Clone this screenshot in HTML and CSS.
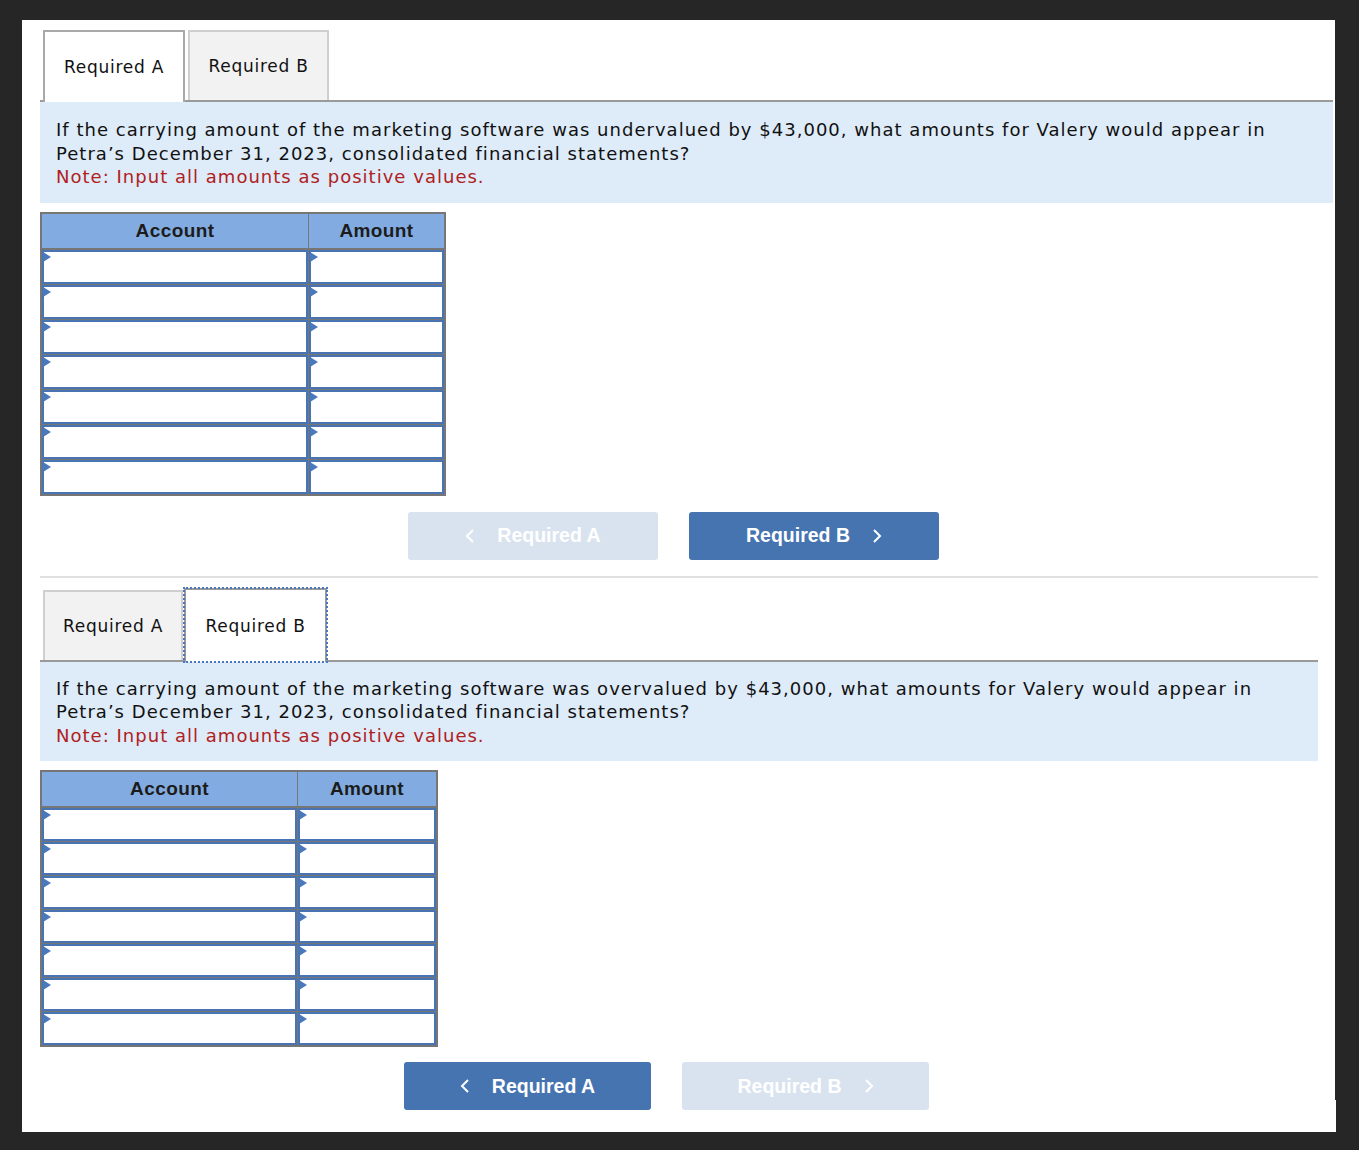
FILE: index.html
```html
<!DOCTYPE html>
<html>
<head>
<meta charset="utf-8">
<link rel="stylesheet" href="styles.css">
</head>
<body>
<div class="panel">
  <section class="part part-a">
    <div class="tabs">
      <div class="tab active">Required A</div>
      <div class="tab">Required B</div>
    </div>
    <div class="question">
      <p>If the carrying amount of the marketing software was undervalued by $43,000, what amounts for Valery would appear in<br>Petra’s December 31, 2023, consolidated financial statements?</p>
      <p class="note">Note: Input all amounts as positive values.</p>
    </div>
    <table class="grid grid-a">
      <thead><tr><th class="c-acc">Account</th><th class="c-amt">Amount</th></tr></thead>
      <tbody>
        <tr><td><div class="inp"></div></td><td><div class="inp"></div></td></tr>
        <tr><td><div class="inp"></div></td><td><div class="inp"></div></td></tr>
        <tr><td><div class="inp"></div></td><td><div class="inp"></div></td></tr>
        <tr><td><div class="inp"></div></td><td><div class="inp"></div></td></tr>
        <tr><td><div class="inp"></div></td><td><div class="inp"></div></td></tr>
        <tr><td><div class="inp"></div></td><td><div class="inp"></div></td></tr>
        <tr><td><div class="inp"></div></td><td><div class="inp"></div></td></tr>
      </tbody>
    </table>
    <div class="nav nav-a">
      <button class="btn disabled"><svg class="chev" viewBox="0 0 10 16" width="10" height="16"><polyline points="8,2 2,8 8,14"/></svg><span>Required A</span></button>
      <button class="btn"><span>Required B</span><svg class="chev" viewBox="0 0 10 16" width="10" height="16"><polyline points="2,2 8,8 2,14"/></svg></button>
    </div>
  </section>
  <div class="sep"></div>
  <section class="part part-b">
    <div class="tabs">
      <div class="tab">Required A</div>
      <div class="tab active focus">Required B</div>
    </div>
    <div class="question">
      <p>If the carrying amount of the marketing software was overvalued by $43,000, what amounts for Valery would appear in<br>Petra’s December 31, 2023, consolidated financial statements?</p>
      <p class="note">Note: Input all amounts as positive values.</p>
    </div>
    <table class="grid grid-b">
      <thead><tr><th class="c-acc">Account</th><th class="c-amt">Amount</th></tr></thead>
      <tbody>
        <tr><td><div class="inp"></div></td><td><div class="inp"></div></td></tr>
        <tr><td><div class="inp"></div></td><td><div class="inp"></div></td></tr>
        <tr><td><div class="inp"></div></td><td><div class="inp"></div></td></tr>
        <tr><td><div class="inp"></div></td><td><div class="inp"></div></td></tr>
        <tr><td><div class="inp"></div></td><td><div class="inp"></div></td></tr>
        <tr><td><div class="inp"></div></td><td><div class="inp"></div></td></tr>
        <tr><td><div class="inp"></div></td><td><div class="inp"></div></td></tr>
      </tbody>
    </table>
    <div class="nav nav-b">
      <button class="btn"><svg class="chev" viewBox="0 0 10 16" width="10" height="16"><polyline points="8,2 2,8 8,14"/></svg><span>Required A</span></button>
      <button class="btn disabled"><span>Required B</span><svg class="chev" viewBox="0 0 10 16" width="10" height="16"><polyline points="2,2 8,8 2,14"/></svg></button>
    </div>
  </section>
  <div class="notch"></div>
</div>
</body>
</html>
```
FILE: styles.css
```css
html, body {
  margin: 0;
  padding: 0;
  background: #262626;
}
body {
  font-family: "DejaVu Sans", Verdana, sans-serif;
  color: #111;
  height: 1150px;
  overflow: hidden;
}
.panel {
  position: relative;
  margin: 20px 0 0 22px;
  width: 1313px;
  height: 1112px;
  background: #fff;
  padding: 10px 0 0 18px;
  box-sizing: border-box;
}
.notch {
  position: absolute;
  right: -1px;
  bottom: 0;
  width: 1px;
  height: 32px;
  background: #fff;
}
.part-a { width: 1293px; }
.part-b { width: 1278px; margin-top: 12px; }

.tabs {
  display: flex;
  padding-left: 3px;
  border-bottom: 2px solid #9a9a9a;
  height: 70px;
  box-sizing: content-box;
}
.tab {
  height: 70px;
  box-sizing: border-box;
  display: flex;
  align-items: center;
  justify-content: center;
  font-size: 17px;
  letter-spacing: 0.75px;
  background: #f2f2f2;
  border: 2px solid #cfcfcf;
  border-bottom: none;
  margin-right: 3px;
}
.part-a .tab:first-child { width: 142px; }
.part-a .tab:nth-child(2) { width: 141px; }
.part-b .tab:first-child { width: 140px; margin-right: 1px; }
.part-b .tab:nth-child(2) { width: 143px; }
.tab.active {
  background: #fff;
  border-color: #a9a9a9;
  height: 72px;
  margin-bottom: -2px;
}
.tab.focus {
  outline: 2px dotted #4a78c0;
  outline-offset: -1px;
  border-color: #9a9a9a;
  margin-top: -2px;
  height: 74px;
}

.question {
  background: #deebf8;
  padding: 16px 16px 14px 16px;
  font-size: 18px;
  letter-spacing: 1.02px;
  line-height: 23.5px;
}
.part-b .question { padding-top: 15px; padding-bottom: 14px; }
.question p { margin: 0; }
.question .note { color: #b0211d; }

.grid {
  border-collapse: collapse;
  margin-top: 9px;
  border: 2px solid #767676;
  font-family: "Liberation Sans", Arial, sans-serif;
}
.grid-a .c-acc { width: 266px; }
.grid-a .c-amt { width: 135px; }
.grid-b .c-acc { width: 255px; }
.grid-b .c-amt { width: 138px; }
.grid th {
  background: #82ace1;
  color: #1c1c1c;
  font-size: 19px;
  letter-spacing: 0.4px;
  font-weight: bold;
  height: 34px;
  padding: 0;
  border: 1px solid #767676;
  border-bottom: 2px solid #767676;
  text-align: center;
}
.grid td {
  padding: 0;
  border: 1px solid #767676;
}
.inp {
  position: relative;
  height: 34px;
  box-sizing: border-box;
  border: 2px solid #4874b4;
  background: #fff;
}
.grid-b .inp { height: 33px; }
.inp::before {
  content: "";
  position: absolute;
  left: -1px;
  top: 0;
  border-left: 8px solid #4a78bd;
  border-top: 5px solid transparent;
  border-bottom: 5px solid transparent;
}

.nav {
  display: flex;
  gap: 31px;
  margin-top: 16px;
}
.nav-a { padding-left: 368px; }
.nav-b { padding-left: 364px; margin-top: 15px; }
.btn {
  width: 250px;
  height: 48px;
  border: none;
  border-radius: 3px;
  background: #4674b1;
  color: #fff;
  font-family: "Liberation Sans", Arial, sans-serif;
  font-weight: bold;
  font-size: 19.5px;
  display: flex;
  align-items: center;
  justify-content: center;
  gap: 22px;
  padding: 0;
}
.nav-b .btn { width: 247px; }
.btn.disabled { background: #d9e3f0; }
.chev polyline {
  fill: none;
  stroke: #fff;
  stroke-width: 2;
}
.sep {
  width: 1278px;
  height: 2px;
  background: #e0e0e0;
  margin-top: 16px;
}
```
